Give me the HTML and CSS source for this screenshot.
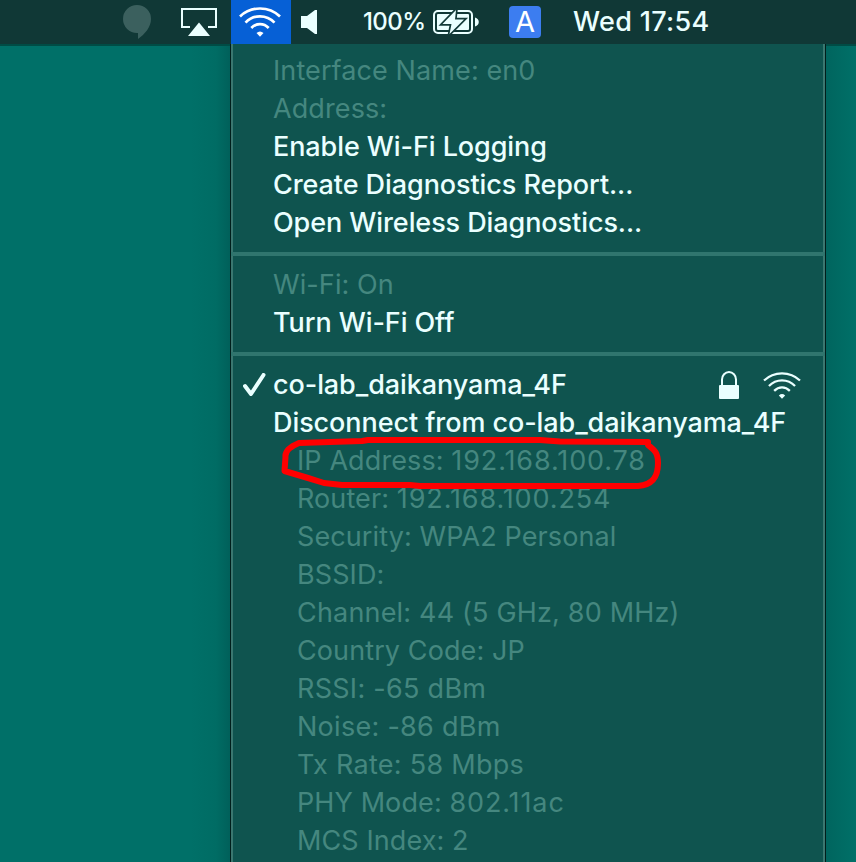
FILE: index.html
```html
<!DOCTYPE html>
<html lang="en">
<head>
<meta charset="utf-8">
<title>Wi-Fi menu</title>
<link rel="stylesheet" href="styles.css">
</head>
<body>
<header class="menubar">
  <svg class="bubble" width="28" height="34" viewBox="0 0 28 34"><path d="M14 0a14 14 0 0 1 14 14c0 8-6 15-13 20v-6h-1A14 14 0 0 1 14 0z" fill="#3b605e"/></svg>
  <svg class="airplay" width="36" height="28" viewBox="0 0 36 28"><path d="M9 19H1V1h34v18h-8" fill="none" stroke="#eaffff" stroke-width="2"/><path d="M18 14.500L29 28H7z" fill="#eaffff"/></svg>
  <div class="wifi-button">
    <svg width="42" height="30" viewBox="0 0 42 30"><g fill="none" stroke="#fff" stroke-width="2.700"><path d="M1 9.500C12 -1.200 30 -1.200 41 9.500"/><path d="M6.500 15.600c8-8.400 21-8.400 29 0"/><path d="M12.300 21c5-5.200 12.400-5.200 17.400 0"/></g><path d="M17.500 26q3.500-3 7 0L21 29.700z" fill="#fff"/></svg>
  </div>
  <svg class="speaker" width="17" height="24" viewBox="0 0 17 24"><path d="M0 6h6l8-6h2v24h-2l-8-6H0z" fill="#eaffff"/></svg>
  <span class="percent">100%</span>
  <svg class="battery" width="46" height="26" viewBox="0 0 46 26"><rect x="1" y="2" width="38" height="22" rx="4" fill="none" stroke="#eaffff" stroke-width="2"/><rect x="4" y="5" width="32" height="16" rx="1" fill="#eaffff"/><path d="M42 8.500c5 1 5 8 0 9z" fill="#eaffff"/><path d="M23 1L9.500 15h9L16.500 25 31 10.500h-9z" fill="#eaffff" stroke="#123a38" stroke-width="3.400" paint-order="stroke"/></svg>
  <span class="input-source">A</span>
  <span class="clock">Wed 17:54</span>
</header>
<main class="menu">
  <div class="row dim interface">Interface Name: en0</div>
  <div class="row dim address">Address:</div>
  <div class="row">Enable Wi-Fi Logging</div>
  <div class="row">Create Diagnostics Report...</div>
  <div class="row">Open Wireless Diagnostics...</div>
  <hr>
  <div class="row dim">Wi-Fi: On</div>
  <div class="row">Turn Wi-Fi Off</div>
  <hr>
  <div class="row network">
    <svg class="check" width="24" height="24" viewBox="0 0 24 24"><path d="M2 13l6 8L20.500 2" fill="none" stroke="#eaffff" stroke-width="4" stroke-linecap="round" stroke-linejoin="round"/></svg>
    <span class="ssid">co-lab_daikanyama_4F</span>
    <svg class="lock" width="20" height="28" viewBox="0 0 20 28"><rect y="14" width="20" height="14" rx="1" fill="#eaffff"/><path d="M3 15V8.500a7 7.500 0 0 1 14 0V15" fill="none" stroke="#eaffff" stroke-width="2"/></svg>
    <svg width="38" height="27" viewBox="0 0 42 30"><g fill="none" stroke="#eaffff" stroke-width="2.500"><path d="M1 9.500C12 -1.200 30 -1.200 41 9.500"/><path d="M6.500 15.600c8-8.400 21-8.400 29 0"/><path d="M12.300 21c5-5.200 12.400-5.200 17.400 0"/></g><path d="M17.500 26q3.500-3 7 0L21 29.700z" fill="#eaffff"/></svg>
  </div>
  <div class="row disconnect">Disconnect from co-lab_daikanyama_4F</div>
  <div class="row dim detail ip">IP Address: <span class="number">192.168.100.78</span>
    <svg class="marker" width="384" height="58" viewBox="280 434 384 58"><path d="M299 443Q284.500 449 285.500 457L284.500 471L308 478L324 483L342 485H410L420 486H638C654 485 658 475 658 463C658 452 654 450 648 445V442L560 441.500L540 440H375L368 440L362 441L330 442Z" fill="none" stroke="#f00" stroke-width="6" stroke-linejoin="round"/></svg>
  </div>
  <div class="row dim detail">Router: <span class="number">192.168.100.254</span></div>
  <div class="row dim detail">Security: WPA2 Personal</div>
  <div class="row dim detail">BSSID:</div>
  <div class="row dim detail figures">Channel: 44 (5 GHz, 80 MHz)</div>
  <div class="row dim detail">Country Code: JP</div>
  <div class="row dim detail signal">RSSI: -65 dBm</div>
  <div class="row dim detail signal">Noise: -86 dBm</div>
  <div class="row dim detail signal">Tx Rate: 58 Mbps</div>
  <div class="row dim detail">PHY Mode: <span class="number">802.11ac</span></div>
  <div class="row dim detail">MCS Index: 2</div>
</main>
</body>
</html>
```
FILE: styles.css
```css
* { box-sizing: border-box; }
body {
  margin: 0;
  width: 856px;
  height: 862px;
  overflow: hidden;
  background: linear-gradient(90deg, #007068 0, #007068 190px, #006c64 216px, #00605a 230px, #00655e 826px, #007068 856px);
  font: 27px/38px Inter, "Liberation Sans", sans-serif;
  font-weight: 500;
  letter-spacing: -0.08px;
  color: #eaffff;
  white-space: nowrap;
}
.menubar {
  display: flex;
  align-items: center;
  height: 44px;
  background: #103836;
  box-shadow: 0 2px 0 #004c45;
}
.bubble { margin-left: 123px; }
.airplay { margin-left: 30px; }
.wifi-button {
  display: flex;
  align-items: center;
  justify-content: center;
  width: 60px;
  height: 44px;
  margin-left: 14px;
  padding-right: 2px;
  background: #0660d6;
}
.speaker { margin-left: 10px; }
.percent { width: 70px; margin-left: 45px; font-size: 24px; letter-spacing: -0.6px; }
.battery { flex: none; }
.input-source {
  width: 32px;
  height: 32px;
  margin-left: 30px;
  border-radius: 4px;
  background: #3c7df0;
  color: #fff;
  font-size: 29px;
  font-weight: 400;
  line-height: 32px;
  text-align: center;
}
.clock { margin-left: 32px; letter-spacing: 0.3px; }
.menu {
  position: relative;
  width: 596px;
  height: 818px;
  margin-left: 230px;
  padding-top: 8px;
  background: #0f544f;
  border: solid #001e1b;
  border-width: 0 1px;
  box-shadow: inset 2px 0 #3b7770, inset -2px 0 #3b7770;
  overflow: hidden;
}
.row { height: 38px; padding-left: 42px; }
.dim { color: #45877f; font-weight: 400; letter-spacing: 0.1px; }
.detail { padding-left: 66px; }
.number { letter-spacing: 0.88px; }
.figures { letter-spacing: 0.18px; }
.signal { letter-spacing: 0.28px; }
hr { height: 4px; margin: 10px 0; border: 0; background: #30756e; }
.network { display: flex; align-items: center; padding: 0 24px 0 12px; }
.ssid { flex: 1; margin-left: 6px; }
.lock { margin-right: 24px; }
.ip { position: relative; }
.marker { position: absolute; left: 49px; top: -8px; z-index: 1; }
```
